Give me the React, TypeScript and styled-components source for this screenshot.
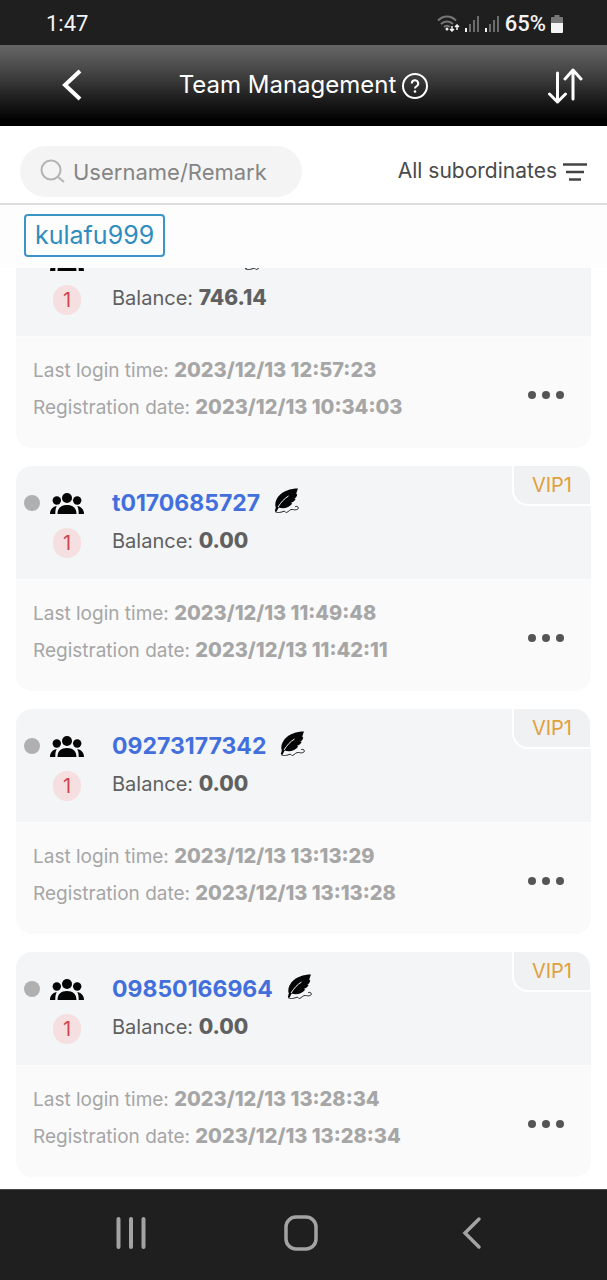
import React, { useLayoutEffect, useRef } from 'react';
import styled, { createGlobalStyle } from 'styled-components';

const GlobalStyle = createGlobalStyle`
  *, *::before, *::after { box-sizing: border-box; }
  body { margin: 0; background: #ffffff; font-family: Inter, "Liberation Sans", sans-serif; }
  button { border: 0; padding: 0; background: none; font: inherit; color: inherit; cursor: pointer; }
  svg { display: block; flex: none; }
`;

const Screen = styled.div`
  display: flex;
  flex-direction: column;
  height: 100vh;
  background: #ffffff;
`;

const StatusBar = styled.div`
  display: flex;
  align-items: center;
  justify-content: space-between;
  flex: none;
  height: 45px;
  padding: 2px 44px 0 46px;
  background: #1f1f1f;
  color: #f4f4f4;
  font: 400 22px/28px Roboto, sans-serif;
`;

const StatusIcons = styled.div`
  display: flex;
  align-items: center;
  gap: 5px;
`;

const BatteryLevel = styled.span`
  font-weight: 500;
`;

const Header = styled.header`
  display: grid;
  grid-template-columns: 1fr auto 1fr;
  align-items: center;
  flex: none;
  height: 81px;
  padding: 0 24px 0 60px;
  background: linear-gradient(#666666 0%, #484848 30%, #1a1a1a 70%, #000000 94%);
  color: #ffffff;
`;

const TitleGroup = styled.div`
  display: flex;
  align-items: center;
  gap: 6px;
  margin-right: 36px;
`;

const Title = styled.h1`
  margin: 0;
  padding-bottom: 2px;
  font-size: 24px;
  line-height: 32px;
  font-weight: 400;
  white-space: nowrap;
`;

const IconButton = styled.button<{ $end?: boolean }>`
  display: flex;
  justify-self: ${(p) => (p.$end ? 'end' : 'start')};
`;

const Toolbar = styled.div`
  display: flex;
  align-items: center;
  justify-content: space-between;
  gap: 20px;
  flex: none;
  padding: 20px 20px 6px;
  border-bottom: 2px solid #dddddd;
`;

const SearchBox = styled.label`
  display: flex;
  align-items: center;
  gap: 8px;
  flex: 0 1 282px;
  min-width: 0;
  height: 51px;
  padding: 0 20px;
  border-radius: 26px;
  background: #f4f4f4;
`;

const SearchInput = styled.input`
  flex: 1;
  min-width: 0;
  width: 0;
  padding: 0;
  border: 0;
  outline: 0;
  background: none;
  color: #555555;
  font: 400 22px/28px Inter, sans-serif;
  &::placeholder { color: #858585; opacity: 1; }
`;

const FilterButton = styled.button`
  display: flex;
  align-items: center;
  gap: 6px;
  padding-bottom: 2px;
  color: #4a4a4a;
  font-size: 21px;
  line-height: 28px;
  white-space: nowrap;
`;

const Crumbs = styled.nav`
  display: flex;
  flex: none;
  padding: 9px 24px 11px;
  background: #fdfdfd;
`;

const Crumb = styled.a`
  padding: 0 9px;
  border: 2px solid #3a94c4;
  border-radius: 4px;
  color: #2f8cc0;
  font-size: 25px;
  line-height: 39px;
  text-decoration: none;
`;

const List = styled.main`
  display: flex;
  flex-direction: column;
  gap: 18px;
  flex: 1;
  min-height: 0;
  padding: 0 16px 12px;
  overflow-y: auto;
  scrollbar-width: none;
`;

const Card = styled.article`
  position: relative;
  flex: none;
  border-radius: 16px;
  overflow: hidden;
  background: #fafafa;
`;

const CardHead = styled.div`
  display: grid;
  grid-template-columns: 16px 34px 1fr;
  grid-template-rows: 40px 36px;
  align-items: center;
  column-gap: 10px;
  padding: 17px 16px 20px 8px;
  border-bottom: 1px solid #fcfcfc;
  background: #f3f5f7;
`;

const StatusDot = styled.span`
  width: 16px;
  height: 16px;
  border-radius: 50%;
  background: #b0b0b0;
`;

const CountBadge = styled.span`
  grid-column: 2;
  justify-self: center;
  width: 28px;
  height: 30px;
  margin-top: 4px;
  border-radius: 15px;
  background: #f6dfe0;
  color: #cf4450;
  font-size: 20px;
  line-height: 30px;
  text-align: center;
`;

const NameRow = styled.div`
  display: flex;
  align-items: center;
  gap: 14px;
  padding-left: 18px;
`;

const UserLink = styled.a`
  min-width: 118px;
  color: #436fdc;
  font-size: 23px;
  line-height: 28px;
  font-weight: 700;
  text-decoration: none;
`;

const QuillButton = styled(IconButton)`
  padding-bottom: 4px;
`;

const Balance = styled.div`
  padding-left: 18px;
  color: #606060;
  font-size: 20px;
  line-height: 28px;
`;

const Amount = styled.strong`
  font-size: 21px;
  font-weight: 800;
`;

const VipTag = styled.span`
  position: absolute;
  top: 0;
  right: 0;
  padding: 0 18px;
  border: solid #ffffff;
  border-width: 0 1px 2px 2px;
  border-radius: 0 16px 0 16px;
  background: #f0f1f2;
  color: #e0a03c;
  font-size: 20px;
  line-height: 38px;
`;

const CardBody = styled.div`
  display: flex;
  align-items: center;
  justify-content: space-between;
  height: 111px;
  padding: 4px 27px 0 17px;
`;

const Details = styled.div`
  padding-bottom: 12px;
  color: #a6a6a6;
  font-size: 19px;
  line-height: 36px;
  white-space: nowrap;
`;

const Stamp = styled.strong`
  font-size: 20px;
  font-weight: 800;
`;

const NavBar = styled.nav`
  display: grid;
  grid-template-columns: repeat(3, 1fr);
  flex: none;
  height: 91px;
  padding: 0 50px 4px 46px;
  border-top: 1px solid #484848;
  background: #1f1f1f;
  color: #a3a3a3;
`;

const NavButton = styled.button`
  display: flex;
  align-items: center;
  justify-content: center;
`;

const WifiIcon = () => (
  <svg width="23" height="18" viewBox="0 0 23 18" fill="none" stroke="#777" strokeWidth="2">
    <path d="M1 5.5C6 0 14 0 19 5.5M4 9c3.500-3.500 8.500-3.500 12 0M7 12c2-1.700 4-1.700 6 0" />
    <circle cx="10" cy="14" r="1.500" fill="#eee" stroke="none" />
    <path d="M15 11v5M13 14l2 2 2-2M20 15v-5M18 12l2-2 2 2" stroke="#f4f4f4" strokeWidth="1.500" />
  </svg>
);

const SignalIcon = () => (
  <svg width="15" height="17" viewBox="0 0 15 17" fill="#6b6b6b">
    <rect x="0" y="13" width="2" height="4" fill="#f4f4f4" />
    <rect x="4" y="9" width="2" height="8" />
    <rect x="8" y="5" width="2" height="12" />
    <rect x="12" y="1" width="2" height="16" />
  </svg>
);

const BatteryIcon = () => (
  <svg width="12" height="18" viewBox="0 0 12 18">
    <path d="M3.500 0h5v2H11a1 1 0 0 1 1 1v5H0V3a1 1 0 0 1 1-1h2.500z" fill="#777" />
    <path d="M0 8h12v9a1 1 0 0 1-1 1H1a1 1 0 0 1-1-1z" fill="#f4f4f4" />
  </svg>
);

const BackIcon = () => (
  <svg width="22" height="34" viewBox="0 0 22 34" fill="none" stroke="#fff" strokeWidth="4">
    <path d="M20 2 5 16l15 14" />
  </svg>
);

const HelpIcon = () => (
  <svg width="26" height="26" viewBox="0 0 26 26" fill="none" stroke="#fff" strokeWidth="2">
    <circle cx="13" cy="13" r="12" />
    <path d="M9.800 10.500a3.200 3.200 0 1 1 4.700 2.800c-1.100.6-1.500 1.200-1.500 2.200" />
    <circle cx="13" cy="18.500" r="1.300" fill="#fff" stroke="none" />
  </svg>
);

const SortIcon = () => (
  <svg width="36" height="36" viewBox="0 0 36 36" fill="none" stroke="#fff" strokeWidth="3" strokeLinecap="round" strokeLinejoin="round">
    <path d="M10.500 5v29M2.500 26l8 8 8-8M26 31V2M18 11l8-9 8 9" />
  </svg>
);

const SearchIcon = () => (
  <svg width="25" height="25" viewBox="0 0 25 25" fill="none" stroke="#b3b3b3" strokeWidth="2">
    <circle cx="11" cy="11" r="9.500" />
    <path d="m18 18 6 5" />
  </svg>
);

const FilterIcon = () => (
  <svg width="24" height="20" viewBox="0 0 24 20" stroke="#444" strokeWidth="2.500">
    <path d="M0 3.500h24M3 11h18M6 18.500h12" />
  </svg>
);

const GroupIcon = () => (
  <svg width="34" height="24" viewBox="0 0 34 24" fill="#050505">
    <circle cx="17" cy="7" r="5" />
    <circle cx="6.800" cy="9.500" r="4.200" />
    <circle cx="27.200" cy="9.500" r="4.200" />
    <path d="M7.500 23c0-6 3.700-9 9.500-9s9.500 3 9.500 9zM0 23c0-4 2-7 6.700-8-1.200 2.500-1.400 5-1.400 8zM34 23c0-4-2-7-6.700-8 1.200 2.500 1.400 5 1.400 8z" />
  </svg>
);

const QuillIcon = () => (
  <svg width="26" height="26" viewBox="0 0 26 26">
    <path d="M24 .5C16.500.5 9 3 4.500 8.300 1.500 12 .6 16.500 1.800 19.500L.8 23l1.700.8 2.200-4.200c5 1.500 10.500.2 13.600-4.200l-1.600-.4c2.300-.7 4-2 5-4l-1.500-.4c1.800-.9 2.700-2.300 3.100-4.200l-1-.3C22.500 4.500 23.200 2.500 24 .5z" fill="#050505" />
    <path d="M4 19C7.500 13.500 10.500 10.500 14.500 8" fill="none" stroke="#f3f5f7" strokeWidth="1" />
    <path d="M1 23.500c3 2 6.500.6 9-.3 1.200-.4 1.300 1.600 2.500 1.300 2.500-.8 3.200-3.500 6.200-3 2.500.7 6 .3 5.600-1.700-.3-1.500-1.800-1.700-3.100-1.200" fill="none" stroke="#222" strokeWidth="1" />
  </svg>
);

const MoreIcon = () => (
  <svg width="36" height="8" viewBox="0 0 36 8" fill="#555">
    <circle cx="4" cy="4" r="4" />
    <circle cx="18" cy="4" r="4" />
    <circle cx="32" cy="4" r="4" />
  </svg>
);

const RecentsIcon = () => (
  <svg width="30" height="32" viewBox="0 0 30 32" stroke="currentColor" strokeWidth="4" strokeLinecap="round">
    <path d="M2.500 2v28M15 2v28M27.500 2v28" />
  </svg>
);

const HomeIcon = () => (
  <svg width="34" height="36" viewBox="0 0 34 36" fill="none" stroke="currentColor" strokeWidth="3.500">
    <rect x="2" y="2" width="30" height="32" rx="10" />
  </svg>
);

const NavBackIcon = () => (
  <svg width="20" height="34" viewBox="0 0 20 34" fill="none" stroke="currentColor" strokeWidth="3.500" strokeLinecap="round">
    <path d="M17 3 3 17l14 14" />
  </svg>
);

interface Member {
  id: number;
  name?: string;
  level?: string;
  balance: string;
  login: string;
  registered: string;
}

const members: Member[] = [
  { id: 1, balance: '746.14', login: '2023/12/13 12:57:23', registered: '2023/12/13 10:34:03' },
  { id: 2, name: 't0170685727', level: 'VIP1', balance: '0.00', login: '2023/12/13 11:49:48', registered: '2023/12/13 11:42:11' },
  { id: 3, name: '09273177342', level: 'VIP1', balance: '0.00', login: '2023/12/13 13:13:29', registered: '2023/12/13 13:13:28' },
  { id: 4, name: '09850166964', level: 'VIP1', balance: '0.00', login: '2023/12/13 13:28:34', registered: '2023/12/13 13:28:34' },
];

const MemberCard = ({ member }: { member: Member }) => (
  <Card>
    <CardHead>
      <StatusDot />
      <GroupIcon />
      <NameRow>
        <UserLink href="#">{member.name}</UserLink>
        <QuillButton aria-label="Edit remark"><QuillIcon /></QuillButton>
      </NameRow>
      <CountBadge>1</CountBadge>
      <Balance>Balance: <Amount>{member.balance}</Amount></Balance>
    </CardHead>
    {member.level && <VipTag>{member.level}</VipTag>}
    <CardBody>
      <Details>
        <div>Last login time: <Stamp>{member.login}</Stamp></div>
        <div>Registration date: <Stamp>{member.registered}</Stamp></div>
      </Details>
      <IconButton aria-label="More"><MoreIcon /></IconButton>
    </CardBody>
  </Card>
);

export default function App() {
  const listRef = useRef<HTMLElement>(null);

  // Open the list at its newest members.
  useLayoutEffect(() => {
    const list = listRef.current;
    if (list) list.scrollTop = list.scrollHeight;
  }, []);

  return (
    <Screen>
      <GlobalStyle />
      <StatusBar>
        <span>1:47</span>
        <StatusIcons>
          <WifiIcon />
          <SignalIcon />
          <SignalIcon />
          <BatteryLevel>65%</BatteryLevel>
          <BatteryIcon />
        </StatusIcons>
      </StatusBar>
      <Header>
        <IconButton aria-label="Back"><BackIcon /></IconButton>
        <TitleGroup>
          <Title>Team Management</Title>
          <IconButton aria-label="Help"><HelpIcon /></IconButton>
        </TitleGroup>
        <IconButton $end aria-label="Sort"><SortIcon /></IconButton>
      </Header>
      <Toolbar>
        <SearchBox>
          <SearchIcon />
          <SearchInput type="text" placeholder="Username/Remark" aria-label="Username/Remark" />
        </SearchBox>
        <FilterButton>
          All subordinates
          <FilterIcon />
        </FilterButton>
      </Toolbar>
      <Crumbs>
        <Crumb href="#">kulafu999</Crumb>
      </Crumbs>
      <List ref={listRef}>
        {members.map((m) => (
          <MemberCard key={m.id} member={m} />
        ))}
      </List>
      <NavBar>
        <NavButton aria-label="Recent apps"><RecentsIcon /></NavButton>
        <NavButton aria-label="Home"><HomeIcon /></NavButton>
        <NavButton aria-label="Back"><NavBackIcon /></NavButton>
      </NavBar>
    </Screen>
  );
}
